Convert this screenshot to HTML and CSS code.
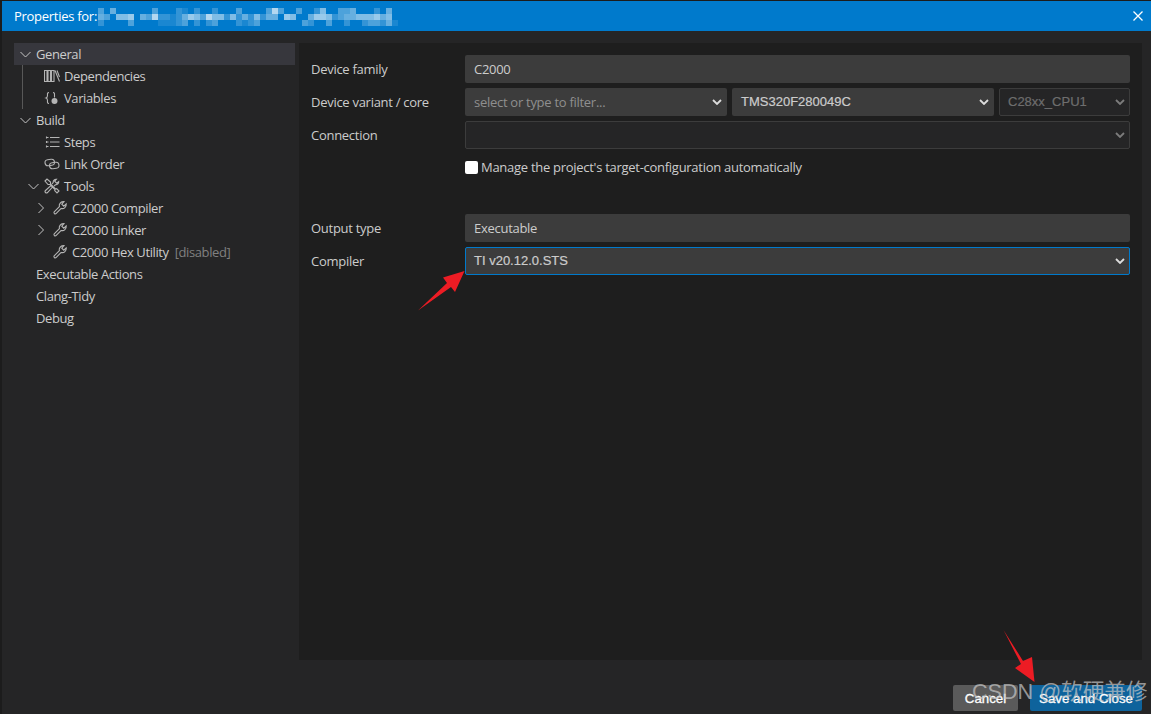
FILE: index.html
```html
<!DOCTYPE html>
<html lang="en">
<head>
<meta charset="utf-8">
<title>Properties</title>
<link rel="stylesheet" href="styles.css">
</head>
<body>
<div class="window">
  <header class="titlebar">
    <span class="title">Properties for:</span>
    <svg class="mosaic" width="300" height="18" viewBox="98 8 300 18">
      <path fill-opacity=".1" d="M182 8h6v6h-6zM158 20h6v6h-6zM164 20h6v6h-6zM170 20h6v6h-6zM242 20h6v6h-6zM392 20h6v6h-6zM170 14h6v6h-6z"/>
      <path fill-opacity=".2" d="M176 8h6v6h-6zM194 8h6v6h-6zM212 8h6v6h-6zM374 8h6v6h-6zM314 8h6v6h-6zM98 20h6v6h-6zM176 20h6v6h-6zM194 20h6v6h-6zM206 20h6v6h-6zM236 20h6v6h-6zM248 20h6v6h-6zM308 20h6v6h-6zM344 20h6v6h-6zM362 20h6v6h-6zM380 20h6v6h-6zM158 14h6v6h-6zM164 14h6v6h-6zM176 14h6v6h-6zM224 14h6v6h-6zM236 14h6v6h-6zM248 14h6v6h-6zM260 14h6v6h-6zM332 14h6v6h-6z"/>
      <path fill-opacity=".3" d="M98 8h6v6h-6zM152 8h6v6h-6zM236 8h6v6h-6zM266 8h6v6h-6zM278 8h6v6h-6zM296 8h6v6h-6zM338 8h6v6h-6zM344 8h6v6h-6zM104 14h6v6h-6zM146 14h6v6h-6zM200 14h6v6h-6zM338 14h6v6h-6zM128 20h6v6h-6zM182 20h6v6h-6zM212 20h6v6h-6zM254 20h6v6h-6zM302 20h6v6h-6zM326 20h6v6h-6zM368 20h6v6h-6zM374 20h6v6h-6z"/>
      <path fill-opacity=".4" d="M110 8h6v6h-6zM350 8h6v6h-6zM386 8h6v6h-6zM98 14h6v6h-6zM140 14h6v6h-6zM182 14h6v6h-6zM242 14h6v6h-6zM266 14h6v6h-6zM272 14h6v6h-6zM308 14h6v6h-6zM344 14h6v6h-6zM350 14h6v6h-6zM380 14h6v6h-6zM386 20h6v6h-6z"/>
      <path fill-opacity=".5" d="M320 8h6v6h-6zM116 14h6v6h-6zM122 14h6v6h-6zM194 14h6v6h-6zM212 14h6v6h-6zM218 14h6v6h-6zM230 14h6v6h-6zM254 14h6v6h-6zM290 14h6v6h-6zM326 14h6v6h-6zM356 14h6v6h-6zM362 14h6v6h-6zM368 14h6v6h-6zM386 14h6v6h-6z"/>
      <path fill-opacity=".6" d="M128 14h6v6h-6zM188 14h6v6h-6zM284 14h6v6h-6zM314 14h6v6h-6zM320 14h6v6h-6zM374 14h6v6h-6z"/>
      <path fill-opacity=".7" d="M272 8h6v6h-6zM152 14h6v6h-6zM206 14h6v6h-6z"/>
    </svg>
    <svg class="close" width="10" height="10" viewBox="0 0 10 10"><path d="M.5.5l9 9M9.5.5l-9 9"/></svg>
  </header>

  <main class="main">
    <nav class="tree">
      <div class="row selected pad0">
        <svg class="chev" viewBox="0 0 16 16"><path d="M.5 6l5 5 5-5"/></svg><span>General</span>
      </div>
      <div class="group">
        <div class="row">
          <svg class="ico" viewBox="0 0 16 16"><path d="M.5 2.500h2.500v11H.5zM4 2.500h2.500v11H4zM7.500 2.500h2.500v11H7.500zM11 2.500l4.500 11M13 2.500l2.500 6.500"/></svg><span>Dependencies</span>
        </div>
        <div class="row">
          <svg class="ico" viewBox="0 0 16 16"><path d="M5 2.500c-2 0-1.500 1.500-1.500 3S3.500 7.500 2 8c1.500.5 1.500 1 1.500 2.500S3 13.500 5 13.500M9 2.500c1.800 0 1.500 1.500 1.500 3v2"/><circle class="solid" cx="10.500" cy="11" r="3"/></svg><span>Variables</span>
        </div>
      </div>
      <div class="row pad0">
        <svg class="chev" viewBox="0 0 16 16"><path d="M.5 6l5 5 5-5"/></svg><span>Build</span>
      </div>
      <div class="row pad1">
        <svg class="ico" viewBox="0 0 16 16"><path d="M6 3.500h9.500M6 8h9.500M6 12.500h9.500M2.500 3.500h2M2.500 8h2M2.500 12.500h2M2.500 2.500v2M2.500 7v2M2.500 11.500v2"/></svg><span>Steps</span>
      </div>
      <div class="row pad1">
        <svg class="ico" viewBox="0 0 16 16"><rect x="1" y="3.500" width="9.500" height="6" rx="3" transform="rotate(-8 5.500 6.500)"/><rect x="5.500" y="6.500" width="9.500" height="6" rx="3" transform="rotate(-8 10 9.500)"/></svg><span>Link Order</span>
      </div>
      <div class="row pad1c">
        <svg class="chev" viewBox="0 0 16 16"><path d="M.5 6l5 5 5-5"/></svg>
        <svg class="ico" viewBox="0 0 16 16"><path d="M1 3l2-2 3.500 3v2l5 5 1.200-.3 2.300 2.300-2 2-2.300-2.300.3-1.200-5-5h-2zM1.500 12.500L7 7.500l1.500 1.500L3.500 14.500a1.300 1.300 0 0 1-2-2zM8 6l1.200-1.500C9 2.500 10.500 1 12.500 1.200l-1.800 2 2 2 2-1.700c.2 2-1.400 3.500-3.300 3.300L10 8.200"/></svg><span>Tools</span>
      </div>
      <div class="row pad2">
        <svg class="chev" viewBox="0 0 16 16"><path d="M2.500 3l5 5-5 5"/></svg>
        <svg class="ico" viewBox="0 0 16 16"><path d="M2.200 11.800l5.200-5.200C6.800 4.400 8.400 1.800 11.200 1.600l.8.100-2.200 2.500 2 2 2.400-2.300c.4 2.900-2.200 5.500-5 4.500L4 13.600c-1 1-2.600-.6-1.800-1.800z"/></svg><span>C2000 Compiler</span>
      </div>
      <div class="row pad2">
        <svg class="chev" viewBox="0 0 16 16"><path d="M2.500 3l5 5-5 5"/></svg>
        <svg class="ico" viewBox="0 0 16 16"><path d="M2.200 11.800l5.200-5.200C6.800 4.400 8.400 1.800 11.200 1.600l.8.100-2.200 2.500 2 2 2.400-2.300c.4 2.900-2.200 5.500-5 4.500L4 13.600c-1 1-2.600-.6-1.800-1.800z"/></svg><span>C2000 Linker</span>
      </div>
      <div class="row pad2">
        <span class="chev"></span>
        <svg class="ico" viewBox="0 0 16 16"><path d="M2.200 11.800l5.200-5.200C6.800 4.400 8.400 1.800 11.200 1.600l.8.100-2.200 2.500 2 2 2.400-2.300c.4 2.900-2.200 5.500-5 4.500L4 13.600c-1 1-2.600-.6-1.800-1.800z"/></svg><span>C2000 Hex Utility</span><span class="muted">[disabled]</span>
      </div>
      <div class="row pad3"><span>Executable Actions</span></div>
      <div class="row pad3"><span>Clang-Tidy</span></div>
      <div class="row pad3"><span>Debug</span></div>
    </nav>

    <section class="panel">
      <div class="form-row">
        <label class="label">Device family</label>
        <div class="field"><span>C2000</span></div>
      </div>
      <div class="form-row">
        <label class="label">Device variant / core</label>
        <div class="triple">
          <div class="field select placeholder"><span>select or type to filter...</span><svg class="arrow" viewBox="0 0 10 6"><path d="M1 1l4 4 4-4"/></svg></div>
          <div class="field select mono"><span>TMS320F280049C</span><svg class="arrow" viewBox="0 0 10 6"><path d="M1 1l4 4 4-4"/></svg></div>
          <div class="field select mono disabled"><span>C28xx_CPU1</span><svg class="arrow" viewBox="0 0 10 6"><path d="M1 1l4 4 4-4"/></svg></div>
        </div>
      </div>
      <div class="form-row">
        <label class="label">Connection</label>
        <div class="field select disabled"><span></span><svg class="arrow" viewBox="0 0 10 6"><path d="M1 1l4 4 4-4"/></svg></div>
      </div>
      <div class="form-row">
        <span class="label"></span>
        <label class="check"><input class="box" type="checkbox"><span>Manage the project's target-configuration automatically</span></label>
      </div>
      <div class="spacer"></div>
      <div class="form-row">
        <label class="label">Output type</label>
        <div class="field"><span>Executable</span></div>
      </div>
      <div class="form-row">
        <label class="label">Compiler</label>
        <div class="field select mono focus"><span>TI v20.12.0.STS</span><svg class="arrow" viewBox="0 0 10 6"><path d="M1 1l4 4 4-4"/></svg></div>
      </div>
    </section>
  </main>

  <footer class="footer">
    <button class="btn cancel">Cancel</button>
    <button class="btn save">Save and Close</button>
  </footer>
</div>

<svg class="annotations" width="1151" height="714" viewBox="0 0 1151 714">
  <polygon points="418,310.500 447,283 443,277.500 464.500,271 455,292 451,287"/>
  <polygon points="1003.500,630 1023,661 1032,657 1034.500,682 1015,668 1021,664"/>
</svg>
<div class="watermark">CSDN @软硬兼修</div>
</body>
</html>
```
FILE: styles.css
```css
* { box-sizing: border-box; }
html, body { margin: 0; height: 714px; overflow: hidden; }
body {
  background: #1c1c1c;
  padding: 1px 0 0 2px;
  font: 13px/22px "Open Sans", "Noto Sans", sans-serif;
  letter-spacing: -.28px;
  color: #cccccc;
  position: relative;
}
.window { height: 713px; background: #252526; display: flex; flex-direction: column; }

.titlebar {
  height: 30px;
  flex: none;
  background: #007acc;
  color: #fff;
  display: flex;
  align-items: center;
  padding-left: 12px;
  padding-right: 8px;
}
.title { width: 84px; flex: none; white-space: nowrap; }
.mosaic { fill: #fff; margin-top: 2px; flex: none; }
.close { margin-left: auto; fill: none; stroke: #fff; stroke-width: 1.300; }

.main { display: flex; gap: 4px; padding: 12px 0 0 12px; flex: none; }
.tree { width: 281px; flex: none; letter-spacing: -.4px; }
.row { height: 22px; display: flex; align-items: center; white-space: nowrap; }
.selected { background: #37373d; }
.pad0 { padding-left: 6px; }
.pad1 { padding-left: 30px; }
.pad1c { padding-left: 14px; }
.pad2 { padding-left: 22px; }
.pad3 { padding-left: 22px; }
.group { margin-left: 8px; border-left: 1px solid #585858; }
.group .row { padding-left: 21px; }
.chev { width: 16px; height: 16px; flex: none; fill: none; stroke: #c5c5c5; stroke-width: 1; }
.ico { width: 16px; height: 16px; flex: none; margin-right: 4px; fill: none; stroke: #b4b4b4; stroke-width: 1.100; }
.ico .solid { fill: #b4b4b4; stroke: none; }
.muted { color: #808080; margin-left: 6px; }

.panel {
  width: 843px;
  height: 617px;
  flex: none;
  background: #1e1e1e;
  padding: 12px;
  display: flex;
  flex-direction: column;
  gap: 5px;
}
.form-row { display: flex; height: 28px; flex: none; align-items: center; }
.label { width: 154px; flex: none; }
.field {
  flex: 1;
  min-width: 0;
  height: 28px;
  background: #3c3c3c;
  border-radius: 2px;
  padding: 0 9px;
  display: flex;
  align-items: center;
  justify-content: space-between;
}
.triple { flex: 1; display: grid; grid-template-columns: 262px 262px 131px; gap: 5px; }
.mono {
  font-family: "Liberation Sans", Arial, sans-serif;
  letter-spacing: 0;
  -webkit-text-stroke: .2px;
}
.placeholder { color: #8f8f8f; }
.arrow { width: 10px; height: 6px; fill: none; stroke: #dcdcdc; stroke-width: 1.800; margin-right: -4px; }
.disabled { background: #252526; border: 1px solid #3c3c3c; color: #6e6e6e; padding: 0 8px; }
.disabled .arrow { stroke: #7c7c7c; }
.focus { border: 1px solid #007acc; padding: 0 8px; }
.check { display: flex; align-items: center; gap: 3px; margin-top: -2px; }
.box {
  appearance: none;
  margin: 0;
  width: 13px;
  height: 13px;
  background: #fff;
  border-radius: 2px;
}
.spacer { height: 22px; flex: none; }

.footer { display: flex; justify-content: flex-end; gap: 12px; padding: 25px 9px 0 0; }
.btn {
  height: 26px;
  border: 0;
  border-radius: 2px;
  color: #fff;
  font: 13.300px "Liberation Sans", Arial, sans-serif;
  -webkit-text-stroke: .3px;
  padding: 0;
}
.cancel { width: 65px; background: #5a5a5a; }
.save { width: 112px; background: #0e639c; }

.annotations { position: absolute; left: 0; top: 0; fill: #ed1c24; pointer-events: none; }
.watermark {
  position: absolute;
  left: 972px;
  top: 678px;
  font: 21.600px/28px "Liberation Sans", "Noto Sans CJK SC", sans-serif;
  letter-spacing: 0;
  color: rgba(200, 200, 200, .7);
  white-space: nowrap;
}
```
